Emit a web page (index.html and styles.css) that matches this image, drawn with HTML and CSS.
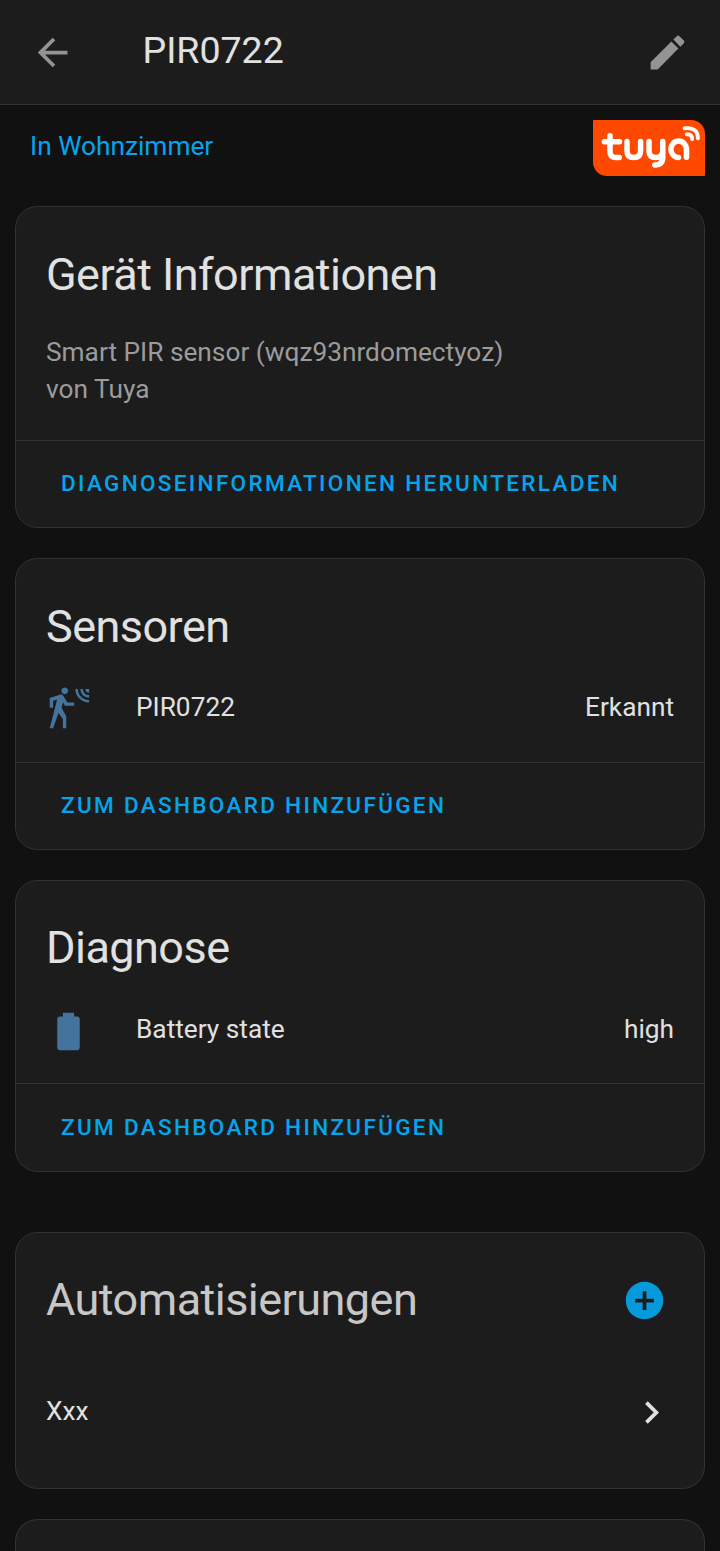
FILE: index.html
```html
<!DOCTYPE html>
<html lang="de">
<head>
<meta charset="utf-8">
<title>PIR0722</title>
<link rel="stylesheet" href="styles.css">
</head>
<body>
<header class="toolbar">
  <svg class="icon" viewBox="0 0 24 24"><path d="M20,11V13H8L13.5,18.5L12.08,19.92L4.16,12L12.08,4.08L13.5,5.5L8,11H20Z"/></svg>
  <h1 class="title">PIR0722</h1>
  <svg class="icon" viewBox="0 0 24 24"><path d="M20.71,7.04C21.1,6.65 21.1,6 20.71,5.63L18.37,3.29C18,2.9 17.35,2.9 16.96,3.29L15.12,5.12L18.87,8.87M3,17.25V21H6.75L17.81,9.93L14.06,6.18L3,17.25Z"/></svg>
</header>
<main class="content">
  <div class="area">
    <a class="area-link">In Wohnzimmer</a>
    <svg class="logo" viewBox="0 0 112 56">
      <path fill="#ff4800" d="M1,0H98A14,14 0 0 1 112,14V55A1,1 0 0 1 111,56H14A14,14 0 0 1 0,42V1A1,1 0 0 1 1,0Z"/>
      <g class="logo-strokes">
        <path d="M17,15.8V31.5Q17,37.6 23,37.6H26.3M11.4,21.8H26.5"/>
        <path d="M34,21.5V30.5Q34,37.6 40.8,37.6Q47.6,37.6 47.6,30.5V21.5"/>
        <path d="M56,21.5V30.5Q56,37.6 62.9,37.6Q69.8,37.6 69.8,30.5V21.5V37Q69.8,45 61.8,45"/>
        <path d="M93.5,37.3V29.2A7.8,8.2 0 1 0 85.5,37.5"/>
        <path class="wave" d="M93.8,14.4Q99,14 99.2,19M91.6,8.3Q104.8,6.8 104.9,18.2"/>
      </g>
    </svg>
  </div>

  <section class="card info">
    <h2 class="card-title">Gerät Informationen</h2>
    <p class="model">Smart PIR sensor (wqz93nrdomectyoz)<br>von Tuya</p>
    <div class="actions"><button class="button">Diagnoseinformationen herunterladen</button></div>
  </section>

  <section class="card entities">
    <h2 class="card-title">Sensoren</h2>
    <div class="row">
      <svg class="icon state" viewBox="0 0 24 24"><path d="M10,0.2C9,0.2 8.2,1 8.2,2C8.2,3 9,3.8 10,3.8C11,3.8 11.8,3 11.8,2C11.8,1 11,0.2 10,0.2M15.67,1A7.33,7.33 0 0,0 23,8.33V7A6,6 0 0,1 17,1H15.67M18.33,1C18.33,3.58 20.42,5.67 23,5.67V4.33C21.16,4.33 19.67,2.84 19.67,1H18.33M21,1A2,2 0 0,0 23,3V1H21M7.92,4.03C7.75,4.03 7.58,4.06 7.42,4.11L2,5.8V11H3.8V7.33L5.91,6.67L2,22H3.8L6.67,13.89L9,17V22H10.8V15.59L8.31,11.05L9.04,8.18L10.12,10H15V8.2H11.38L9.38,4.87C9.08,4.37 8.54,4.03 7.92,4.03Z"/></svg>
      <span class="name">PIR0722</span><span>Erkannt</span>
    </div>
    <div class="actions"><button class="button">Zum Dashboard hinzufügen</button></div>
  </section>

  <section class="card entities diagnose">
    <h2 class="card-title">Diagnose</h2>
    <div class="row">
      <svg class="icon state" viewBox="0 0 24 24"><path d="M16.67,4H15V2H9V4H7.33A1.33,1.33 0 0,0 6,5.33V20.67C6,21.4 6.6,22 7.33,22H16.67A1.33,1.33 0 0,0 18,20.67V5.33C18,4.6 17.4,4 16.67,4Z"/></svg>
      <span class="name">Battery state</span><span>high</span>
    </div>
    <div class="actions"><button class="button">Zum Dashboard hinzufügen</button></div>
  </section>

  <section class="card automations">
    <div class="card-head">
      <h2 class="card-title">Automatisierungen</h2>
      <svg class="icon add" viewBox="0 0 24 24"><path d="M17,13H13V17H11V13H7V11H11V7H13V11H17M12,2A10,10 0 0,0 2,12A10,10 0 0,0 12,22A10,10 0 0,0 22,12A10,10 0 0,0 12,2Z"/></svg>
    </div>
    <div class="link-row">
      <span>Xxx</span>
      <svg class="icon chevron" viewBox="0 0 24 24"><path d="M8.59,16.58L13.17,12L8.59,7.41L10,6L16,12L10,18L8.59,16.58Z"/></svg>
    </div>
  </section>

  <section class="card next"></section>
</main>
</body>
</html>
```
FILE: styles.css
```css
* { box-sizing: border-box; }
html { background: #111; }
body {
  margin: 0;
  background: #111;
  color: #e1e1e1;
  font-family: Roboto, sans-serif;
  font-size: 26.25px;
  line-height: 37.5px;
}
h1, h2, p { margin: 0; font-weight: 400; }
.icon { width: 45px; height: 45px; flex: none; fill: currentColor; display: block; }
.toolbar {
  height: 105px;
  padding: 0 30px;
  display: flex;
  align-items: center;
  background: #1c1c1c;
  border-bottom: 1px solid #333;
  color: #939393;
}
.title {
  flex: 1;
  padding: 0 0 5px 67.5px;
  font-size: 37.5px;
  line-height: 44px;
  color: #e1e1e1;
}
.content { padding: 15px 15px 0; }
.area {
  height: 56px;
  margin-bottom: 30px;
  padding-left: 15px;
  display: flex;
  justify-content: space-between;
}
.area-link { padding-top: 8px; color: #05a4ee; }
.logo { width: 112px; height: 56px; }
.logo-strokes {
  fill: none;
  stroke: #fff;
  stroke-width: 5.5;
  stroke-linecap: round;
  stroke-linejoin: round;
}
.logo-strokes .wave { stroke-width: 3.9; }
.card {
  display: flex;
  flex-direction: column;
  margin-bottom: 30px;
  background: #1c1c1c;
  border: 1px solid #333;
  border-radius: 22.5px;
}
.card-title {
  padding: 38px 30px 0;
  font-size: 45px;
  line-height: 60px;
  letter-spacing: -0.54px;
}
.info { height: 322px; }
.entities { height: 292px; }
.model { padding: 29px 30px 0; line-height: 37px; color: #9b9b9b; }
.actions {
  height: 87px;
  margin-top: auto;
  padding: 0 30px 2px;
  border-top: 1px solid #333;
  display: flex;
  align-items: center;
}
.button {
  padding: 0 15px;
  border: 0;
  background: none;
  color: #05a4ee;
  font: 500 22.5px/34px Roboto, sans-serif;
  letter-spacing: 2.34px;
  white-space: nowrap;
  text-transform: uppercase;
}
.row { display: flex; padding: 30px 30px 0; }
.state { color: #44739e; }
.name { flex: 1; padding-left: 45px; }
.row span { padding-top: 2px; }
.diagnose { margin-bottom: 60px; }
.diagnose .card-title, .automations .card-title { padding-top: 37px; }
.diagnose .row { padding-top: 31px; }
.diagnose .actions { height: 88px; }
.automations { height: 257px; }
.card-head { display: flex; justify-content: space-between; color: #c7c7c7; }
.add { margin: 45px 37px 0 0; color: #0699dc; }
.link-row {
  display: flex;
  justify-content: space-between;
  align-items: center;
  padding: 60px 30px 0;
}
.link-row span { padding-bottom: 1px; }
.next {
  height: 32px;
  margin-bottom: 0;
  border-bottom: 0;
  border-radius: 22.5px 22.5px 0 0;
}
```
